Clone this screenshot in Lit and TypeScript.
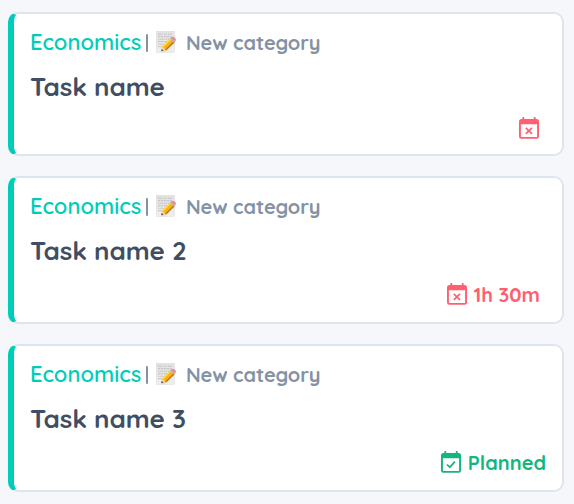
import { LitElement, html, css, svg } from "lit";
import { customElement, property } from "lit/decorators.js";

type Status = "unplanned" | "planned";

interface Task {
  name: string;
  status: Status;
  label: string;
}

@customElement("note-icon")
class NoteIcon extends LitElement {
  static styles = css`
    :host { display: block; width: 20px; height: 22px; }
    svg { display: block; }
  `;
  render() {
    return html`<svg width="20" height="22" viewBox="0 0 20 22">
      <defs>
        <linearGradient id="paper" x1="0" y1="0" x2="0" y2="1">
          <stop offset="0" stop-color="#e2e2e2" />
          <stop offset="1" stop-color="#efefef" />
        </linearGradient>
      </defs>
      <rect x="0.3" y="0.3" width="18" height="21.2" fill="url(#paper)" stroke="#dadada" stroke-width=".5" />
      <g stroke="#b4b4b4" stroke-width=".8" fill="none">
        <path d="M2 3.2h5m1 0h3m1 0h4" stroke-dasharray="1.6 .6" />
        <path d="M2 5.7h14" stroke-dasharray="2.2 .7" />
        <path d="M2 8.2h12" stroke-dasharray="1.4 .6" />
        <path d="M2 10.7h9" stroke-dasharray="2.5 .6" />
        <path d="M2 13.2h6" stroke-dasharray="1.4 .6" />
        <path d="M2 15.7h4" stroke-dasharray="1.8 .5" />
      </g>
      <path d="M5.5 20.8 19 9.8l-.5 2.5L9 20.6z" fill="#bdbdbd" opacity=".6" />
      <path d="M5.2 20.3 6 15.4 10.2 19.4z" fill="#ecd0a0" />
      <path d="M5.2 20.3 5.6 18 7.4 19.8z" fill="#444" />
      <path d="M6 15.4 14 7.4 18.2 11.4 10.2 19.4z" fill="#f6b414" />
      <path d="M6 15.4 14 7.4 15.2 8.5 7.2 16.5z" fill="#ffd95a" />
      <path d="M9.2 18.4 17.2 10.4 18.2 11.4 10.2 19.4z" fill="#c47b09" />
      <path d="M14 7.4 15 6.4 19.2 10.4 18.2 11.4z" fill="#a9b2b9" />
      <path d="M15 6.4Q17 5 18.9 6.8T19.2 10.4z" fill="#f2858e" />
    </svg>`;
  }
}

@customElement("calendar-icon")
class CalendarIcon extends LitElement {
  @property() status: Status = "unplanned";
  static styles = css`
    :host { display: block; width: 20px; height: 22px; }
    svg { display: block; }
  `;
  render() {
    const mark =
      this.status === "planned"
        ? svg`<path d="M6 13.5 8.8 16.2 14 10.6" />`
        : svg`<path d="M6.8 10.8 13 16.8M13 10.8 6.8 16.8" />`;
    return html`<svg width="20" height="22" viewBox="0 0 20 22" fill="none" stroke="currentColor">
      <path fill="currentColor" stroke="none" fill-rule="evenodd"
        d="M3.4 .7A.9 .9 0 0 1 5.2 .7V2H14.8V.7A.9 .9 0 0 1 16.6 .7V2H17.5A2.5 2.5 0 0 1 20 4.5V19.5A2.3 2.3 0 0 1 17.7 21.8H2.3A2.3 2.3 0 0 1 0 19.5V4.5A2.5 2.5 0 0 1 2.5 2H3.4ZM1.9 7.3V19.4Q1.9 20 2.5 20H17.5Q18.1 20 18.1 19.4V7.3Z" />
      <g stroke-width="1.7">${mark}</g>
    </svg>`;
  }
}

@customElement("task-card")
class TaskCard extends LitElement {
  @property({ attribute: false }) task!: Task;
  static styles = css`
    :host {
      display: flex;
      flex-direction: column;
      box-sizing: border-box;
      background: #fff;
      border: 2px solid #dee6ed;
      border-left: 6px solid #00cdb8;
      border-radius: 10px;
      padding: 15px 22px 14px 16px;
      white-space: nowrap;
    }
    .meta { display: flex; align-items: center; height: 26px; color: #8492a6; }
    .subject { width: 111px; font-size: 22px; font-weight: 600; color: #00cdb8; }
    .divider { width: 2.4px; height: 18px; margin: 2px 7.6px 0 5px; background: #8492a6; border-radius: 1px; }
    .category { margin-left: 10px; font-size: 20px; font-weight: 700; letter-spacing: -0.08px; }
    .name { margin-top: 15px; height: 34px; line-height: 34px; font-size: 26px; font-weight: 700; color: #414d61; letter-spacing: -0.1px; }
    .status { display: flex; justify-content: flex-end; align-items: center; gap: 6px; color: #ff5f6f; font-size: 20px; font-weight: 700; line-height: 26px; margin-top: auto; }
    .status calendar-icon { margin-bottom: 2px; }
    .status.planned { color: #13b67c; margin-right: -6px; gap: 7px; }
    .status.bare { padding-right: 1px; margin-bottom: -1px; }
  `;
  render() {
    const { name, status, label } = this.task;
    return html`
      <div class="meta">
        <span class="subject">Economics</span>
        <span class="divider"></span>
        <note-icon></note-icon>
        <span class="category">New category</span>
      </div>
      <div class="name">${name}</div>
      <div class="status ${status} ${label ? "" : "bare"}">
        <calendar-icon .status=${status}></calendar-icon>
        ${label ? html`<span>${label}</span>` : null}
      </div>
    `;
  }
}

@customElement("app-root")
class AppRoot extends LitElement {
  static styles = css`
    :host {
      display: flex;
      flex-direction: column;
      gap: 20px;
      box-sizing: border-box;
      height: 504px;
      padding: 12px 10px 12px 8px;
      background: #f5f7fb;
      font-family: Quicksand, Lato, sans-serif;
    }
    task-card { height: 148px; }
    .compact { height: 144px; }
  `;
  private tasks: Task[] = [
    { name: "Task name", status: "unplanned", label: "" },
    { name: "Task name 2", status: "unplanned", label: "1h 30m" },
    { name: "Task name 3", status: "planned", label: "Planned" },
  ];
  render() {
    return this.tasks.map(
      (t) => html`<task-card class=${t.label ? "" : "compact"} .task=${t}></task-card>`
    );
  }
}
